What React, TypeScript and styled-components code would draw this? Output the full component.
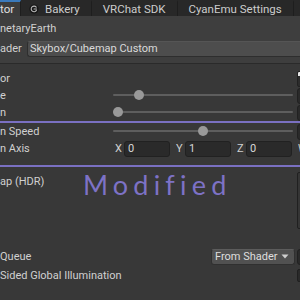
import styled, { createGlobalStyle } from "styled-components";

const GlobalStyle = createGlobalStyle`
  html, body {
    margin: 0;
    padding: 0;
    background: #383838;
  }
`;

const Screen = styled.div`
  width: 300px;
  height: 300px;
  overflow: hidden;
  background: #383838;
  white-space: nowrap;
  font-family: Roboto, Inter, "Liberation Sans", sans-serif;
  font-size: 11px;
  color: #d0d0d0;
`;

const TabBar = styled.div`
  display: flex;
  align-items: stretch;
  height: 16px;
  background: #282828;
  font-size: 11.5px;
`;

const Tab = styled.div<{ $active?: boolean; $pad?: string }>`
  display: flex;
  align-items: center;
  gap: 6px;
  box-sizing: border-box;
  padding: ${(p) => p.$pad ?? "0 11px"};
  background: ${(p) => (p.$active ? "#3c3c3c" : "transparent")};
  border-top: 2px solid ${(p) => (p.$active ? "#3a79bb" : "transparent")};
  border-right: 1px solid #1e1e1e;
  color: ${(p) => (p.$active ? "#e0e0e0" : "#cccccc")};
  flex: none;
`;

const Header = styled.div`
  background: #3e3e3e;
  border-bottom: 1px solid #2a2a2a;
  padding-bottom: 6px;
`;

const NameRow = styled.div`
  display: flex;
  align-items: center;
  height: 24px;
  color: #d0d0d0;
`;

const ShaderRow = styled.div`
  display: flex;
  align-items: center;
  height: 17px;
`;

const ShaderLabel = styled.div`
  width: 27px;
  flex: none;
`;

const ShaderSelect = styled.div`
  flex: 1;
  box-sizing: border-box;
  height: 16px;
  display: flex;
  align-items: center;
  padding-left: 2px;
  background: #4d4d4d;
  border: 1px solid #2e2e2e;
  border-top-color: #555555;
  border-right: none;
  border-radius: 3px 0 0 3px;
  color: #dadada;
`;

const Body = styled.div`
  padding-top: 6px;
`;

const Row = styled.div<{ $h?: number; $top?: boolean; $mt?: number }>`
  position: relative;
  display: flex;
  align-items: ${(p) => (p.$top ? "flex-start" : "center")};
  height: ${(p) => p.$h ?? 17}px;
  margin-top: ${(p) => p.$mt ?? 0}px;
`;

const Label = styled.div<{ $w?: number; $pt?: number }>`
  width: ${(p) => p.$w ?? 113}px;
  flex: none;
  line-height: 17px;
  padding-top: ${(p) => p.$pt ?? 0}px;
`;

const Spacer = styled.div<{ $w: number }>`
  width: ${(p) => p.$w}px;
  flex: none;
`;

const Slider = styled.div`
  position: relative;
  width: 180px;
  height: 17px;
  margin-right: 4px;
  flex: none;
  &::before {
    content: "";
    position: absolute;
    left: 0;
    right: 0;
    top: 7px;
    height: 2px;
    border-radius: 1px;
    background: #5e5e5e;
  }
`;

const Thumb = styled.div`
  position: absolute;
  top: 3px;
  width: 10px;
  height: 10px;
  margin-left: -5px;
  border-radius: 50%;
  background: #999999;
`;

const Field = styled.div<{ $w?: number }>`
  width: ${(p) => p.$w ?? 50}px;
  height: 16px;
  box-sizing: border-box;
  flex: none;
  display: flex;
  align-items: center;
  padding-left: 3px;
  background: #2a2a2a;
  border: 1px solid #212121;
  border-radius: 3px;
  color: #d8d8d8;
`;

const Swatch = styled.div`
  width: 40px;
  height: 16px;
  box-sizing: border-box;
  flex: none;
  border: 1px solid #212121;
  border-radius: 2px;
  background: linear-gradient(#e8e8e8 0 4px, #2c2c2c 4px);
`;

const Divider = styled.div<{ $mt?: number }>`
  height: 2px;
  margin-top: ${(p) => p.$mt ?? 0}px;
  background: #7a70c2;
`;

const AxisLabel = styled.div`
  width: 11px;
  flex: none;
  padding-left: 2px;
  box-sizing: border-box;
`;

const AxisGap = styled.div`
  width: 4px;
  flex: none;
`;

const TextureSlot = styled.div`
  width: 40px;
  height: 57px;
  margin-top: 5px;
  flex: none;
  box-sizing: border-box;
  border: 1px solid #202020;
  border-radius: 2px;
  background: #353535;
`;

const Watermark = styled.div`
  position: absolute;
  left: 83px;
  top: 1px;
  font-family: Lato, "DejaVu Sans", sans-serif;
  font-weight: 400;
  font-size: 27px;
  letter-spacing: 5.2px;
  color: #7d72c6;
  pointer-events: none;
`;

const Dropdown = styled.div`
  width: 84px;
  height: 16px;
  box-sizing: border-box;
  flex: none;
  margin-right: 2px;
  display: flex;
  align-items: center;
  justify-content: space-between;
  padding: 0 5px 0 3px;
  background: #515151;
  border: 1px solid #303030;
  border-top-color: #5c5c5c;
  border-radius: 3px;
  color: #dedede;
`;

const Checkbox = styled.div`
  width: 13px;
  height: 13px;
  flex: none;
  box-sizing: border-box;
  background: #2a2a2a;
  border: 1px solid #202020;
  border-radius: 2px;
`;

function BakeryIcon() {
  return (
    <svg width="10" height="10" viewBox="0 0 10 10">
      <circle cx="5" cy="5" r="4.6" fill="#141414" />
      <path
        d="M7.2 3.2 A2.8 2.8 0 1 0 7.4 6.4 M5 5 L7.6 5"
        stroke="#b8b8b8"
        strokeWidth="1.1"
        fill="none"
        strokeLinecap="round"
      />
    </svg>
  );
}

function Caret() {
  return (
    <svg width="8" height="5" viewBox="0 0 8 5">
      <path d="M0.5 0.5 L7.5 0.5 L4 4.5 Z" fill="#cfcfcf" />
    </svg>
  );
}

function SliderRow({ label, value }: { label: string; value: number }) {
  return (
    <Row>
      <Label>{label}</Label>
      <Slider>
        <Thumb style={{ left: 5 + value * 170 }} />
      </Slider>
      <Field />
    </Row>
  );
}

export default function App() {
  return (
    <>
      <GlobalStyle />
      <Screen>
        <TabBar>
          <Tab $active $pad="0 6px 0 0">tor</Tab>
          <Tab $pad="0 11px 0 8px">
            <BakeryIcon />
            Bakery
          </Tab>
          <Tab>VRChat SDK</Tab>
          <Tab>CyanEmu Settings</Tab>
        </TabBar>
        <Header>
          <NameRow>netaryEarth</NameRow>
          <ShaderRow>
            <ShaderLabel>ader</ShaderLabel>
            <ShaderSelect>Skybox/Cubemap Custom</ShaderSelect>
          </ShaderRow>
        </Header>
        <Body>
          <Row>
            <Label>or</Label>
            <Spacer $w={184} />
            <Swatch />
          </Row>
          <SliderRow label="e" value={0.125} />
          <SliderRow label="n" value={0} />
          <Divider />
          <SliderRow label="n Speed" value={0.5} />
          <Row>
            <Label>n Axis</Label>
            <AxisLabel>X</AxisLabel>
            <Field $w={46}>0</Field>
            <AxisGap />
            <AxisLabel>Y</AxisLabel>
            <Field $w={46}>1</Field>
            <AxisGap />
            <AxisLabel>Z</AxisLabel>
            <Field $w={46}>0</Field>
            <AxisGap />
            <AxisLabel>W</AxisLabel>
          </Row>
          <Divider $mt={8} />
          <Row $h={63} $top>
            <Label $pt={6}>ap (HDR)</Label>
            <Spacer $w={184} />
            <TextureSlot />
            <Watermark>Modified</Watermark>
          </Row>
          <Row $h={19} $mt={17}>
            <Label $w={211}>Queue</Label>
            <Dropdown>
              From Shader
              <Caret />
            </Dropdown>
            <Field />
          </Row>
          <Row $h={19}>
            <Label $w={297}>Sided Global Illumination</Label>
            <Checkbox />
          </Row>
        </Body>
      </Screen>
    </>
  );
}
